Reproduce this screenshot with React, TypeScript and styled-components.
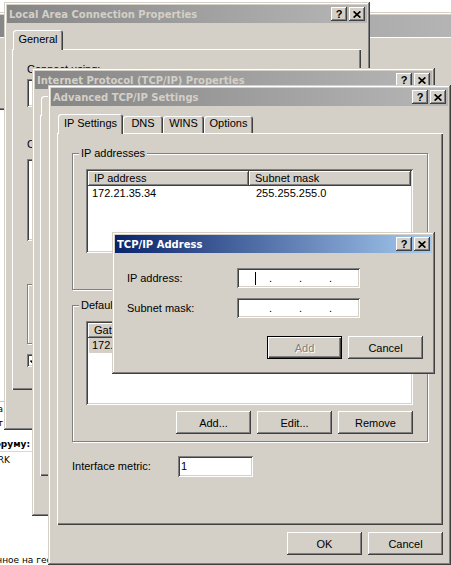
import React from "react";
import styled, { createGlobalStyle, css } from "styled-components";

const FACE = "#d4d0c8";
const SHADOW = "#808080";
const DARK = "#404040";
const UI_FONT = `"Liberation Sans", Arial, sans-serif`;
const TITLE_FONT = `"DejaVu Sans", Verdana, sans-serif`;

const GlobalStyle = createGlobalStyle`
  html, body { margin: 0; padding: 0; background: #fff; }
  body { font-family: ${UI_FONT}; font-size: 11px; color: #000; }
  *, *::before, *::after { box-sizing: border-box; }
`;

const raised = css`
  box-shadow: inset -1px -1px ${DARK}, inset 1px 1px #fff, inset -2px -2px ${SHADOW}, inset 2px 2px ${FACE};
`;
const sunken = css`
  box-shadow: inset 1px 1px ${SHADOW}, inset -1px -1px #fff, inset 2px 2px ${DARK}, inset -2px -2px ${FACE};
`;

const Desktop = styled.div`
  position: relative;
  width: 451px;
  height: 565px;
  overflow: hidden;
  background: #fff;
`;

// windows sit on the desktop at their own coordinates, each one its own stacking layer
const Window = styled.div<{ $x: number; $y: number; $w: number; $h: number }>`
  position: absolute;
  z-index: 0;
  left: ${p => p.$x}px;
  top: ${p => p.$y}px;
  width: ${p => p.$w}px;
  height: ${p => p.$h}px;
  padding: 3px;
  display: flex;
  flex-direction: column;
  background: ${FACE};
  box-shadow: inset -1px -1px ${DARK}, inset 1px 1px ${FACE}, inset -2px -2px ${SHADOW}, inset 2px 2px #fff;
  font-family: ${UI_FONT};
  font-size: 11px;
  line-height: 13px;
`;

const TitleBar = styled.div<{ $active?: boolean; $height?: number }>`
  flex: none;
  height: ${p => p.$height ?? 18}px;
  display: flex;
  align-items: center;
  padding: 0 2px;
  background: ${p =>
    p.$active
      ? "linear-gradient(90deg, #0a246a, #a6caf0)"
      : "linear-gradient(90deg, #868686, #b6b6b6)"};
  color: ${p => (p.$active ? "#fff" : "#d4d0c8")};
  font: bold 10px ${TITLE_FONT};
  white-space: nowrap;
  overflow: hidden;
`;

const TitleText = styled.span`
  flex: 1;
  overflow: hidden;
`;

const CaptionButton = styled.div`
  flex: none;
  width: 16px;
  height: 14px;
  margin-left: 2px;
  display: flex;
  align-items: center;
  justify-content: center;
  background: ${FACE};
  ${raised}
  color: #000;
  font: bold 11px ${UI_FONT};
`;

const Body = styled.div<{ $pad: string }>`
  flex: 1;
  min-height: 0;
  display: flex;
  flex-direction: column;
  padding: ${p => p.$pad};
`;

const TabRow = styled.div`
  flex: none;
  height: 19px;
  display: flex;
  align-items: flex-end;
  padding-left: 1px;
`;

const Tab = styled.div<{ $active?: boolean; $w: number }>`
  position: relative;
  z-index: ${p => (p.$active ? 1 : 0)};
  flex: none;
  width: ${p => p.$w}px;
  height: ${p => (p.$active ? 20 : 17)}px;
  margin-bottom: ${p => (p.$active ? -1 : 0)}px;
  padding-top: ${p => (p.$active ? 3 : 1)}px;
  text-align: center;
  background: ${FACE};
  border-radius: 3px 3px 0 0;
  box-shadow: inset 1px 1px #fff, inset -1px 0 ${DARK}, inset -2px 0 ${SHADOW};
  white-space: nowrap;
`;

const TabPanel = styled.div<{ $pad: string }>`
  flex: 1;
  min-height: 0;
  display: flex;
  flex-direction: column;
  padding: ${p => p.$pad};
  background: ${FACE};
  box-shadow: inset 1px 1px #fff, inset -1px -1px ${DARK}, inset -2px -2px ${SHADOW};
  overflow: hidden;
`;

const ButtonRow = styled.div<{ $mt: number }>`
  flex: none;
  display: flex;
  justify-content: flex-end;
  gap: 6px;
  margin-top: ${p => p.$mt}px;
`;

const Button = styled.button<{ $default?: boolean }>`
  flex: none;
  width: 75px;
  height: 23px;
  padding: 0;
  border: none;
  background: ${FACE};
  font: 11px ${UI_FONT};
  color: #000;
  ${p =>
    p.$default
      ? css`box-shadow: inset 0 0 0 1px #000, inset 2px 2px #fff, inset -2px -2px ${DARK}, inset -3px -3px ${SHADOW};`
      : raised}
  &:disabled {
    color: ${SHADOW};
    text-shadow: 1px 1px #fff;
  }
`;

const GroupBox = styled.div<{ $mt: number; $h?: number; $pad: string }>`
  position: relative;
  flex: none;
  margin-top: ${p => p.$mt}px;
  ${p => (p.$h ? `height: ${p.$h}px;` : "")}
  padding: ${p => p.$pad};
  border: 1px solid ${SHADOW};
  box-shadow: inset 1px 1px #fff, 1px 1px #fff;
  display: flex;
  flex-direction: column;
`;

const GroupLabel = styled.span`
  position: absolute;
  top: -7px;
  left: 6px;
  padding: 0 2px;
  background: ${FACE};
  white-space: nowrap;
`;

const ListView = styled.div<{ $h: number }>`
  flex: none;
  height: ${p => p.$h}px;
  padding: 2px;
  background: #fff;
  ${sunken}
  display: flex;
  flex-direction: column;
  overflow: hidden;
`;

const HeaderRow = styled.div`
  flex: none;
  display: flex;
  height: 15px;
`;

const HeaderCell = styled.div<{ $w?: number }>`
  ${p => (p.$w ? `width: ${p.$w}px; flex: none;` : "flex: 1;")}
  height: 15px;
  line-height: 15px;
  padding-left: 6px;
  background: ${FACE};
  box-shadow: inset -1px -1px ${DARK}, inset 1px 1px #fff, inset -2px -2px ${SHADOW};
  white-space: nowrap;
  overflow: hidden;
`;

const ListRow = styled.div`
  flex: none;
  display: flex;
  height: 15px;
  line-height: 15px;
`;

const ListCell = styled.div<{ $w?: number; $pad: number }>`
  ${p => (p.$w ? `width: ${p.$w}px; flex: none;` : "flex: 1;")}
  padding-left: ${p => p.$pad}px;
  white-space: nowrap;
  overflow: hidden;
`;

const SelectedText = styled.span`
  display: inline-block;
  padding: 0 3px;
  background: ${FACE};
`;

const FormRow = styled.div<{ $mt: number }>`
  flex: none;
  display: flex;
  align-items: center;
  margin-top: ${p => p.$mt}px;
`;

const FormLabel = styled.div<{ $w: number }>`
  flex: none;
  width: ${p => p.$w}px;
  white-space: nowrap;
`;

const TextField = styled.div<{ $w: number; $h: number }>`
  flex: none;
  width: ${p => p.$w}px;
  height: ${p => p.$h}px;
  padding: 2px 3px;
  line-height: ${p => p.$h - 4}px;
  background: #fff;
  ${sunken}
  white-space: nowrap;
  overflow: hidden;
`;

const IpField = styled.div`
  flex: none;
  width: 123px;
  height: 20px;
  padding: 2px 0 2px 5px;
  display: flex;
  background: #fff;
  ${sunken}
`;

const Octet = styled.div`
  width: 27px;
  display: flex;
  align-items: center;
  justify-content: center;
`;

const Dot = styled.span`
  width: 3px;
  line-height: 16px;
  text-align: center;
`;

const Caret = styled.div`
  width: 1px;
  height: 13px;
  background: #000;
`;

const Box = styled.div<{ $h: number; $mt: number }>`
  flex: none;
  height: ${p => p.$h}px;
  margin-top: ${p => p.$mt}px;
  padding: 4px 6px;
  background: #fff;
  ${sunken}
  display: flex;
  align-items: center;
  white-space: nowrap;
  overflow: hidden;
`;

const Line = styled.div<{ $mt?: number }>`
  flex: none;
  margin-top: ${p => p.$mt ?? 0}px;
  white-space: nowrap;
`;

const CheckRow = styled.div<{ $mt: number }>`
  flex: none;
  display: flex;
  align-items: center;
  gap: 5px;
  margin-top: ${p => p.$mt}px;
  white-space: nowrap;
`;

const CheckBox = styled.div`
  flex: none;
  width: 13px;
  height: 13px;
  background: #fff;
  ${sunken}
  display: flex;
  align-items: center;
  justify-content: center;
`;

const MenuStrip = styled.div`
  flex: 1;
  box-shadow: inset 0 1px #fff;
`;

// the forum page that shows through below and left of the dialogs
const ForumPage = styled.div`
  position: absolute;
  z-index: 0;
  left: -240px;
  top: 401px;
  width: 300px;
  height: 170px;
  background: #fff;
  border-top: 1px solid #c4c4c4;
  display: flex;
  flex-direction: column;
  font: 9px ${TITLE_FONT};
  line-height: 14px;
  color: #000;
`;

const PageLine = styled.div<{ $right: number; $mt?: number; $bold?: boolean; $rule?: boolean }>`
  flex: none;
  height: 14px;
  margin-top: ${p => p.$mt ?? 0}px;
  padding-right: ${p => p.$right}px;
  text-align: right;
  white-space: nowrap;
  font-weight: ${p => (p.$bold ? "bold" : "normal")};
  ${p => (p.$rule ? "border-bottom: 1px solid #d8d8d8; height: 15px;" : "")}
`;

const CloseGlyph = () => (
  <svg width="8" height="7" viewBox="0 0 8 7">
    <path d="M0.6 0.4L7.4 6.6M7.4 0.4L0.6 6.6" stroke="#000" strokeWidth="1.7" />
  </svg>
);

const CaptionButtons = () => (
  <>
    <CaptionButton>?</CaptionButton>
    <CaptionButton>
      <CloseGlyph />
    </CaptionButton>
  </>
);

const CheckMark = () => (
  <svg width="7" height="7" viewBox="0 0 7 7">
    <path d="M0.5 3.5L2.5 5.5L6.5 1" stroke="#000" strokeWidth="1.6" fill="none" />
  </svg>
);

const LocalAreaWindow = () => (
  <Window $x={4} $y={2} $w={366} $h={428}>
    <TitleBar>
      <TitleText>Local Area Connection Properties</TitleText>
      <CaptionButtons />
    </TitleBar>
    <Body $pad="7px 6px 7px 5px">
      <TabRow>
        <Tab $active $w={50}>General</Tab>
      </TabRow>
      <TabPanel $pad="14px 14px 0 15px">
        <Line>Connect using:</Line>
        <Box $h={28} $mt={3} />
        <ButtonRow $mt={6}>
          <Button>Configure...</Button>
        </ButtonRow>
        <Line $mt={2}>Components checked are used by this connection:</Line>
        <Box $h={82} $mt={8} />
        <ButtonRow $mt={8}>
          <Button>Install...</Button>
          <Button>Uninstall</Button>
          <Button>Properties</Button>
        </ButtonRow>
        <GroupBox $mt={12} $h={60} $pad="12px 8px 0 8px">
          <GroupLabel>Description</GroupLabel>
        </GroupBox>
        <CheckRow $mt={10}>
          <CheckBox>
            <CheckMark />
          </CheckBox>
        </CheckRow>
      </TabPanel>
      <ButtonRow $mt={7}>
        <Button>OK</Button>
        <Button>Cancel</Button>
      </ButtonRow>
    </Body>
  </Window>
);

const TcpIpWindow = () => (
  <Window $x={32} $y={68} $w={403} $h={448}>
    <TitleBar>
      <TitleText>Internet Protocol (TCP/IP) Properties</TitleText>
      <CaptionButtons />
    </TitleBar>
    <Body $pad="7px 5px 7px 5px">
      <TabRow>
        <Tab $active $w={50} />
        <Tab $w={130} />
      </TabRow>
      <TabPanel $pad="12px 14px 0 14px" />
      <ButtonRow $mt={7}>
        <Button>OK</Button>
        <Button>Cancel</Button>
      </ButtonRow>
    </Body>
  </Window>
);

const AdvancedWindow = () => (
  <Window $x={48} $y={85} $w={403} $h={480}>
    <TitleBar>
      <TitleText>Advanced TCP/IP Settings</TitleText>
      <CaptionButtons />
    </TitleBar>
    <Body $pad="8px 5px 7px 6px">
      <TabRow>
        <Tab $active $w={65}>IP Settings</Tab>
        <Tab $w={40}>DNS</Tab>
        <Tab $w={41}>WINS</Tab>
        <Tab $w={49}>Options</Tab>
      </TabRow>
      <TabPanel $pad="20px 15px 0 15px">
        <GroupBox $mt={0} $pad="15px 14px 7px 13px">
          <GroupLabel>IP addresses</GroupLabel>
          <ListView $h={84}>
            <HeaderRow>
              <HeaderCell $w={161}>IP address</HeaderCell>
              <HeaderCell>Subnet mask</HeaderCell>
            </HeaderRow>
            <ListRow>
              <ListCell $w={161} $pad={4}>172.21.35.34</ListCell>
              <ListCell $pad={7}>255.255.255.0</ListCell>
            </ListRow>
          </ListView>
          <ButtonRow $mt={6}>
            <Button>Add...</Button>
            <Button>Edit...</Button>
            <Button>Remove</Button>
          </ButtonRow>
        </GroupBox>
        <GroupBox $mt={15} $pad="15px 14px 7px 13px">
          <GroupLabel>Default gateways:</GroupLabel>
          <ListView $h={84}>
            <HeaderRow>
              <HeaderCell $w={161}>Gateway</HeaderCell>
              <HeaderCell>Metric</HeaderCell>
            </HeaderRow>
            <ListRow>
              <ListCell $w={161} $pad={1}>
                <SelectedText>172.21.35.1</SelectedText>
              </ListCell>
              <ListCell $pad={7}>Automatic</ListCell>
            </ListRow>
          </ListView>
          <ButtonRow $mt={6}>
            <Button>Add...</Button>
            <Button>Edit...</Button>
            <Button>Remove</Button>
          </ButtonRow>
        </GroupBox>
        <FormRow $mt={14}>
          <FormLabel $w={106}>Interface metric:</FormLabel>
          <TextField $w={75} $h={21}>1</TextField>
        </FormRow>
      </TabPanel>
      <ButtonRow $mt={7}>
        <Button>OK</Button>
        <Button>Cancel</Button>
      </ButtonRow>
    </Body>
  </Window>
);

const AddressInput = ({ focused }: { focused?: boolean }) => (
  <IpField>
    <Octet>{focused && <Caret />}</Octet>
    <Dot>.</Dot>
    <Octet />
    <Dot>.</Dot>
    <Octet />
    <Dot>.</Dot>
    <Octet />
  </IpField>
);

const AddressDialog = () => (
  <Window $x={112} $y={232} $w={323} $h={142}>
    <TitleBar $active>
      <TitleText>TCP/IP Address</TitleText>
      <CaptionButtons />
    </TitleBar>
    <Body $pad="15px 9px 12px 12px">
      <FormRow $mt={0}>
        <FormLabel $w={110}>IP address:</FormLabel>
        <AddressInput focused />
      </FormRow>
      <FormRow $mt={10}>
        <FormLabel $w={110}>Subnet mask:</FormLabel>
        <AddressInput />
      </FormRow>
      <ButtonRow $mt={18}>
        <Button $default disabled>
          Add
        </Button>
        <Button>Cancel</Button>
      </ButtonRow>
    </Body>
  </Window>
);

export default function App() {
  return (
    <>
      <GlobalStyle />
      <Desktop>
        <Window $x={-20} $y={12} $w={491} $h={98}>
          <TitleBar $height={22} />
          <MenuStrip />
        </Window>
        <ForumPage>
          <PageLine $right={57}>Показать подпись: да</PageLine>
          <PageLine $right={57}>Ответ</PageLine>
          <PageLine $right={30} $mt={7} $bold $rule>
            Отправить ответ форуму:
          </PageLine>
          <PageLine $right={50} $mt={1}>NETWORK</PageLine>
          <PageLine $right={8} $mt={86}>Сообщение, отправленное на гео</PageLine>
        </ForumPage>
        <LocalAreaWindow />
        <TcpIpWindow />
        <AdvancedWindow />
        <AddressDialog />
      </Desktop>
    </>
  );
}
